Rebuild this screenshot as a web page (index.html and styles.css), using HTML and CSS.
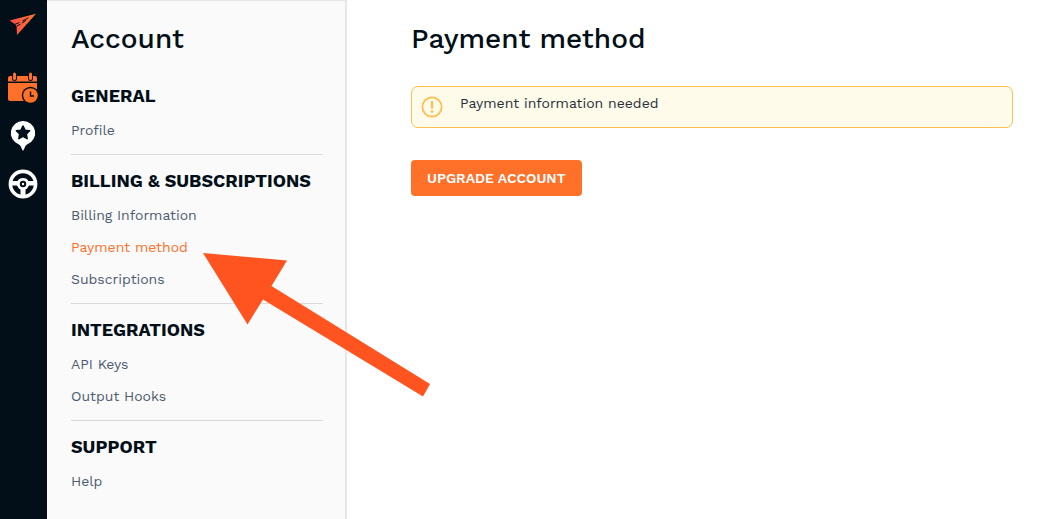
FILE: index.html
```html
<!DOCTYPE html>
<html lang="en">
<head>
<meta charset="utf-8">
<meta name="viewport" content="width=device-width, initial-scale=1">
<title>Payment method</title>
<link rel="stylesheet" href="styles.css">
</head>
<body>
<div class="app">
  <nav class="rail" aria-label="Main">
    <a class="rail-logo" href="#" aria-label="Home">
      <svg width="28" height="24" viewBox="0 0 28 24">
        <defs><linearGradient id="plane" x1="0" y1="0" x2="1" y2="0"><stop offset="0" stop-color="#ff484b"/><stop offset="1" stop-color="#ff7a2e"/></linearGradient></defs>
        <path fill="url(#plane)" d="M1.500 8.600 28 1.800 9 23 8.600 14 6.500 11.800Z"/>
        <path d="m7 12.300 4.500-1.800M14.500 9l6-3.200M9 14l3.500-1.800M14 11l4-2.600" stroke="#030f18" fill="none"/>
      </svg>
    </a>
    <a class="rail-link" href="#" aria-label="Schedule">
      <svg width="32" height="32" viewBox="0 0 32 32" fill="#ff7029">
        <path d="M2 4h25a2 2 0 0 1 2 2v3.500H0V6a2 2 0 0 1 2-2ZM0 11h29v16a2 2 0 0 1-2 2H2a2 2 0 0 1-2-2Z"/>
        <rect x="4" y="0" width="5" height="9" rx="2.500" fill="#030f18"/>
        <rect x="20" y="0" width="5" height="9" rx="2.500" fill="#030f18"/>
        <rect x="5" y=".5" width="3" height="7.500" rx="1.500"/>
        <rect x="21" y=".5" width="3" height="7.500" rx="1.500"/>
        <circle cx="22.500" cy="23.500" r="8.700" fill="#030f18"/>
        <circle cx="22.500" cy="23.500" r="7.300"/>
        <path d="M22.500 19.500v4.500H26" fill="none" stroke="#030f18" stroke-width="1.400"/>
      </svg>
    </a>
    <a class="rail-link" href="#" aria-label="Places">
      <svg width="32" height="32" viewBox="0 0 32 32" fill="#fff">
        <path d="M15 1a12 12 0 0 1 4.500 23.200c-1.900.8-2.500 2.200-3 4L15 31l-1.500-2.800c-.5-1.800-1.100-3.200-3-4A12 12 0 0 1 15 1Z"/>
        <path fill="#030f18" stroke="#030f18" stroke-width="1.600" stroke-linejoin="round" d="m15 6 2 4.200 4.600.6-3.300 3.200.8 4.600-4.100-2.200-4.100 2.200.8-4.600-3.300-3.200 4.600-.6Z"/>
      </svg>
    </a>
    <a class="rail-link" href="#" aria-label="Drivers">
      <svg width="32" height="32" viewBox="0 0 32 32">
        <circle cx="15" cy="16" r="12.600" fill="none" stroke="#fff" stroke-width="3.600"/>
        <path fill="#fff" d="M3 13h6.500l2.200-2.200h6.600l2.200 2.200H27v4.500h-6L17.500 21v7h-5v-7L9 17.500H3Z"/>
        <circle cx="15" cy="16" r="6" fill="#fff"/>
        <circle cx="15" cy="16" r="3.200" fill="#030f18"/>
        <circle cx="15" cy="16" r="1.200" fill="#fff"/>
      </svg>
    </a>
  </nav>

  <aside class="sidebar">
    <h1 class="title">Account</h1>
    <section class="group">
      <h2 class="group-title">General</h2>
      <a class="item" href="#">Profile</a>
    </section>
    <section class="group">
      <h2 class="group-title">Billing &amp; Subscriptions</h2>
      <a class="item" href="#">Billing Information</a>
      <a class="item item-active" href="#" aria-current="page">Payment method</a>
      <a class="item" href="#">Subscriptions</a>
    </section>
    <section class="group">
      <h2 class="group-title">Integrations</h2>
      <a class="item" href="#">API Keys</a>
      <a class="item" href="#">Output Hooks</a>
    </section>
    <section class="group">
      <h2 class="group-title">Support</h2>
      <a class="item" href="#">Help</a>
    </section>
  </aside>

  <main class="content">
    <h1 class="title">Payment method</h1>
    <div class="alert" role="status">
      <svg class="alert-icon" width="22" height="22" viewBox="0 0 22 22">
        <circle cx="11" cy="11" r="9.600" fill="none" stroke="#ffbe4d" stroke-width="1.800"/>
        <path d="M11 6v5.500" stroke="#ffbe4d" stroke-width="2.400" stroke-linecap="round"/>
        <circle cx="11" cy="15.600" r="1.400" fill="#ffbe4d"/>
      </svg>
      <p class="alert-text">Payment information needed</p>
    </div>
    <button class="button" type="button">UPGRADE ACCOUNT</button>
  </main>

  <svg class="pointer" width="228" height="144" viewBox="0 0 228 144" aria-hidden="true">
    <path fill="#ff5420" d="m0 0 84 7.500-15.500 25.500L227 131l-7 12.500L60 46.500 44.500 71.500Z"/>
  </svg>
</div>
</body>
</html>
```

FILE: styles.css
```css
* {
  box-sizing: border-box;
}

body {
  margin: 0;
  background: #fff;
  color: #030f18;
  font-family: "Work Sans", Inter, sans-serif;
  font-size: 14px;
}

h1, h2, p {
  margin: 0;
}

.app {
  position: relative;
  display: flex;
  min-height: 100vh;
}

.rail {
  flex: none;
  display: flex;
  flex-direction: column;
  gap: 16px;
  width: 47px;
  padding: 12px 0 0 8px;
  background: #030f18;
}

.rail-logo,
.rail-link {
  display: block;
  height: 32px;
}

.rail-logo {
  height: 44px;
}

.rail svg {
  display: block;
}

.sidebar {
  flex: none;
  width: 300px;
  padding: 20px 22px 0 24px;
  border-top: 1px solid #e6e6e6;
  border-right: 2px solid #e6e6e6;
  background: #fafafa;
}

.title {
  font-size: 28px;
  font-weight: 500;
  line-height: 36px;
}

.sidebar .title {
  margin-bottom: 13px;
}

.group {
  padding: 14px 0 8px;
  border-bottom: 1px solid #dadada;
}

.group:last-child {
  border-bottom: 0;
}

.group-title {
  margin-bottom: 6px;
  font-size: 18px;
  font-weight: 700;
  line-height: 24px;
  text-transform: uppercase;
  white-space: nowrap;
}

.item {
  display: block;
  color: #4d5a70;
  line-height: 32px;
  text-decoration: none;
}

.item-active {
  color: #ff7029;
}

.content {
  flex: 1;
  padding: 21px 34px 20px 64px;
}

.alert {
  display: flex;
  gap: 17px;
  min-height: 42px;
  margin: 29px 0 32px;
  padding: 6px 9px;
  border: 1px solid #ffbe4d;
  border-radius: 7px;
  background: #fffbea;
}

.alert-icon {
  flex: none;
  margin-top: 3px;
}

.alert-text {
  color: #273039;
  line-height: 20px;
}

.button {
  height: 36px;
  padding: 0 16px;
  border: 0;
  border-radius: 4px;
  background: #ff7029;
  color: #fff;
  font: 600 14px/20px "Work Sans", Inter, sans-serif;
}

.pointer {
  position: absolute;
  top: 253px;
  left: 203px;
  pointer-events: none;
}
```
